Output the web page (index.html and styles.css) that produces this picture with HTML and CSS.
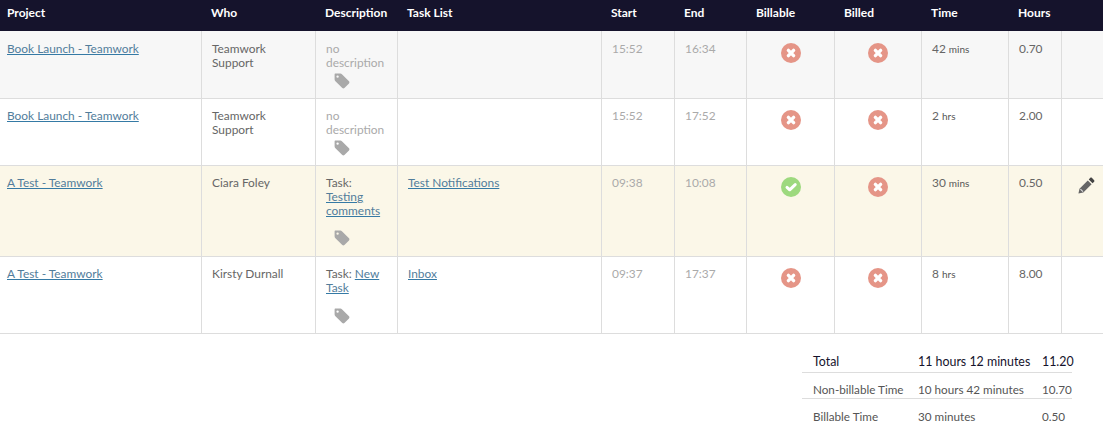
FILE: index.html
```html
<!DOCTYPE html>
<html lang="en">
<head>
<meta charset="utf-8">
<title>Time logs</title>
<link rel="stylesheet" href="styles.css">
</head>
<body>
<svg class="defs" width="0" height="0" aria-hidden="true">
  <symbol id="tag" viewBox="0 0 16 16"><path fill-rule="evenodd" d="M1.2 0.6H6.4C7 0.6 7.5 0.8 7.9 1.2L15 8.3C15.6 8.9 15.6 9.8 15 10.4L10.4 15C9.8 15.6 8.9 15.6 8.3 15L1.2 7.9C0.8 7.5 0.6 7 0.6 6.4V1.2C0.6 0.9 0.9 0.6 1.2 0.6ZM3.6 2.4A1.2 1.2 0 1 0 3.6 4.8A1.2 1.2 0 1 0 3.6 2.4Z"/></symbol>
  <symbol id="no" viewBox="0 0 20 20"><circle cx="10" cy="10" r="10" fill="#e59587"/><path d="M7.4 7.4L12.6 12.6M12.6 7.4L7.4 12.6" stroke="#fff" stroke-width="3.4" stroke-linecap="round" fill="none"/></symbol>
  <symbol id="yes" viewBox="0 0 20 20"><circle cx="10" cy="10" r="10" fill="#9dd97e"/><path d="M6 10.4L8.7 12.8L14.2 7.6" stroke="#fff" stroke-width="3" stroke-linecap="round" stroke-linejoin="round" fill="none"/></symbol>
  <symbol id="pencil" viewBox="0 0 16 16"><path d="M11.6 0.8C12 0.4 12.6 0.4 13 0.8L15.2 3C15.6 3.4 15.6 4 15.2 4.4L13.7 5.9L10.1 2.3Z" fill="#444"/><path d="M9.2 3.2L12.8 6.8L5 14.6L0.4 15.6L1.4 11Z" fill="#666"/><path d="M2.3 11.3L4.7 13.7" stroke="#e4e4e4" stroke-width="1"/></symbol>
</svg>
<table class="logs">
  <colgroup>
    <col class="c-project"><col class="c-who"><col class="c-desc"><col class="c-list"><col class="c-start"><col class="c-end"><col class="c-billable"><col class="c-billed"><col class="c-time"><col class="c-hours"><col class="c-edit">
  </colgroup>
  <thead>
    <tr><th>Project</th><th>Who</th><th>Description</th><th>Task List</th><th>Start</th><th>End</th><th>Billable</th><th>Billed</th><th>Time</th><th>Hours</th><th></th></tr>
  </thead>
  <tbody>
    <tr class="row-a grey">
      <td><a href="#">Book Launch - Teamwork</a></td>
      <td>Teamwork Support</td>
      <td class="muted">no description<svg class="tag near"><use href="#tag"/></svg></td>
      <td></td>
      <td class="muted">15:52</td><td class="muted">16:34</td>
      <td class="flag"><svg class="state"><use href="#no"/></svg></td>
      <td class="flag"><svg class="state"><use href="#no"/></svg></td>
      <td>42 <small>mins</small></td><td>0.70</td><td></td>
    </tr>
    <tr class="row-b">
      <td><a href="#">Book Launch - Teamwork</a></td>
      <td>Teamwork Support</td>
      <td class="muted">no description<svg class="tag near"><use href="#tag"/></svg></td>
      <td></td>
      <td class="muted">15:52</td><td class="muted">17:52</td>
      <td class="flag"><svg class="state"><use href="#no"/></svg></td>
      <td class="flag"><svg class="state"><use href="#no"/></svg></td>
      <td>2 <small>hrs</small></td><td>2.00</td><td></td>
    </tr>
    <tr class="row-c cream">
      <td><a href="#">A Test - Teamwork</a></td>
      <td>Ciara Foley</td>
      <td>Task: <a href="#">Testing comments</a><svg class="tag far"><use href="#tag"/></svg></td>
      <td><a href="#">Test Notifications</a></td>
      <td class="muted">09:38</td><td class="muted">10:08</td>
      <td class="flag"><svg class="state"><use href="#yes"/></svg></td>
      <td class="flag"><svg class="state"><use href="#no"/></svg></td>
      <td>30 <small>mins</small></td><td>0.50</td>
      <td class="edit"><svg class="pencil"><use href="#pencil"/></svg></td>
    </tr>
    <tr class="row-d">
      <td><a href="#">A Test - Teamwork</a></td>
      <td>Kirsty Durnall</td>
      <td>Task: <a href="#">New Task</a><svg class="tag far"><use href="#tag"/></svg></td>
      <td><a href="#">Inbox</a></td>
      <td class="muted">09:37</td><td class="muted">17:37</td>
      <td class="flag"><svg class="state"><use href="#no"/></svg></td>
      <td class="flag"><svg class="state"><use href="#no"/></svg></td>
      <td>8 <small>hrs</small></td><td>8.00</td><td></td>
    </tr>
  </tbody>
</table>
<table class="summary">
  <tr class="total"><td>Total</td><td>11 hours 12 minutes</td><td>11.20</td></tr>
  <tr class="sub"><td>Non-billable Time</td><td>10 hours 42 minutes</td><td>10.70</td></tr>
  <tr class="last"><td>Billable Time</td><td>30 minutes</td><td>0.50</td></tr>
</table>
</body>
</html>
```
FILE: styles.css
```css
* { box-sizing: border-box; }
html, body { margin: 0; padding: 0; background: #fff; }
body { font-family: "Lato", "Liberation Sans", sans-serif; font-size: 11.9px; line-height: 14px; color: #666; }
.defs { display: block; height: 0; }

.logs { width: 1103px; table-layout: fixed; border-collapse: separate; border-spacing: 0; }
.c-project { width: 202px; }
.c-who { width: 114px; }
.c-desc { width: 82px; }
.c-list { width: 204px; }
.c-start { width: 73px; }
.c-end { width: 72px; }
.c-billable { width: 88px; }
.c-billed { width: 87px; }
.c-time { width: 87px; }
.c-hours { width: 53px; }
.c-edit { width: 41px; }

.logs th { height: 31px; padding: 0 0 5px 9px; background: #15132c; color: #fff; font-size: 12px; font-weight: 700; text-align: left; }
.logs th:first-child { padding-left: 7px; }
.logs td { padding: 10px 10px 0 10px; vertical-align: top; border-right: 1px solid #ddd; border-bottom: 1px solid #ddd; }
.logs td:first-child { padding-left: 7px; }
.logs td:last-child { border-right: 0; }
.logs .row-a td { height: 68px; padding-top: 11px; }
.row-b td { height: 67px; }
.row-c td { height: 91px; }
.row-d td { height: 77px; }
.grey td { background: #f7f7f7; }
.cream td { background: #fbf7e8; }

a { color: #527d9b; text-decoration: underline; text-decoration-color: #357aa5; }
.logs .muted { color: #aaa; }
small { font-size: 10px; color: #555; }

.tag { display: block; width: 16px; height: 16px; margin-left: 8px; fill: #a9a9a9; }
.tag.near { margin-top: 3px; }
.tag.far { margin-top: 13px; }
.row-c .tag.far { margin-top: 12px; }

.logs .flag { padding: 11px 0 0; text-align: center; }
.logs .row-a .flag { padding-top: 12px; }
.state { display: inline-block; width: 20px; height: 20px; vertical-align: top; }
.logs .edit { padding: 11px 0 0 16px; }
.pencil { display: block; width: 17px; height: 17px; }

.summary { width: 270px; margin: 17px 31px 0 auto; table-layout: fixed; border-collapse: collapse; color: #555; font-size: 11.7px; }
.summary td { padding: 0 0 0 11px; white-space: nowrap; }
.summary td:nth-child(1) { width: 105px; }
.summary td:nth-child(2) { width: 123px; }
.summary td:nth-child(3) { width: 42px; padding-left: 12px; }
.summary .total td { height: 21px; padding-top: 2px; font-size: 12.4px; color: #15132c; border-bottom: 1px solid #ddd; }
.summary .sub td { height: 26px; padding-top: 7px; border-bottom: 1px solid #ddd; }
.summary .last td { height: 33px; padding-top: 2px; }
```
